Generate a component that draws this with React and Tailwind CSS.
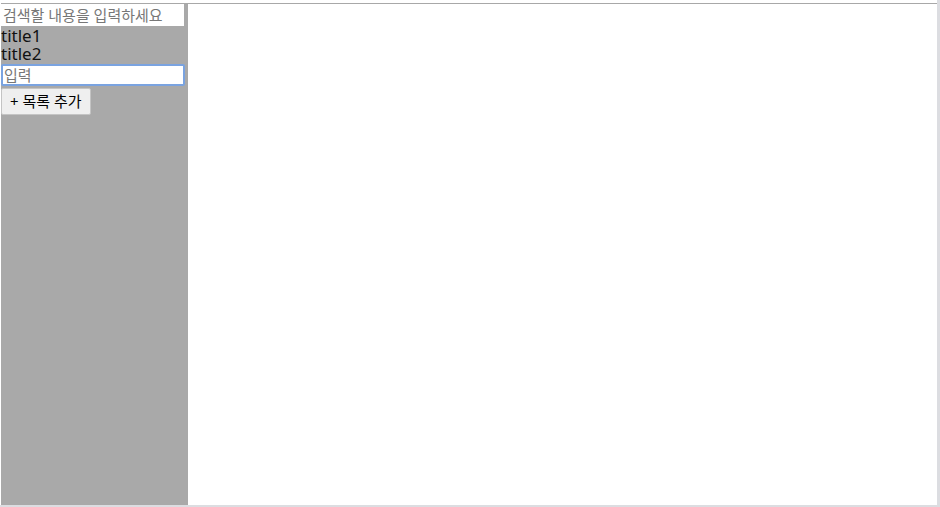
export default function App() {
  const font = { fontFamily: '"Noto Sans", "Noto Sans CJK KR", sans-serif' };
  return (
    <div className="w-[940px] h-[507px] bg-[#dcdde1] overflow-hidden" style={font}>
      <div className="w-[937px] h-[505px] bg-white pt-[3px] flex flex-col">
        <div className="h-px bg-[#a8a8a8] ml-px"></div>
        <div className="flex flex-1 min-h-0 pl-px">
          <div className="w-[187px] bg-[#a9a9a9] flex flex-col items-start">
            <input
              className="w-[183px] h-[22px] bg-white px-[2px] text-[15px] leading-[20px] text-black placeholder:text-[#777] outline-none"
              placeholder="검색할 내용을 입력하세요"
            />
            <div className="text-[17px] leading-[18px] text-[#111] mt-[1px]">title1</div>
            <div className="text-[17px] leading-[18px] text-[#111]">title2</div>
            <input
              className="w-[184px] h-[22px] mt-px bg-white px-[1px] text-[15px] leading-[18px] text-black placeholder:text-[#777] border-2 border-[#7aa3e0] rounded-[2px] outline-none"
              placeholder="입력"
            />
            <button className="mt-[2px] h-[27px] px-[8px] bg-[#efefef] border border-[#c4c4c4] rounded-[2px] text-[15px] text-black">
              + 목록 추가
            </button>
          </div>
          <div className="flex-1 bg-white"></div>
        </div>
      </div>
    </div>
  );
}
